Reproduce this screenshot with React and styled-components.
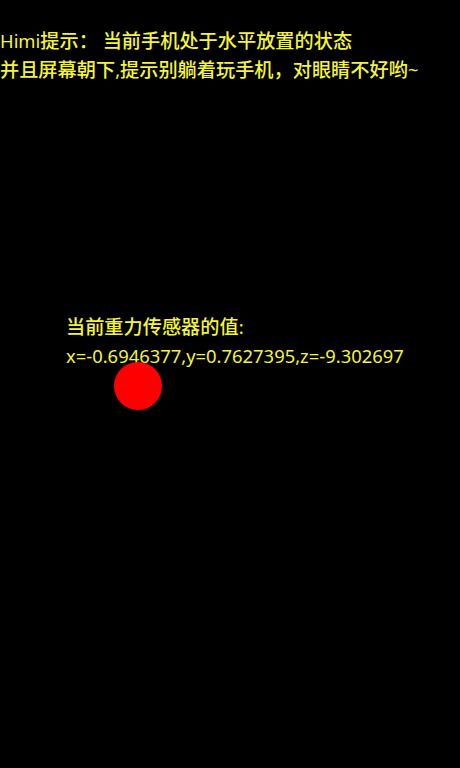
import React from "react";
import styled, { createGlobalStyle } from "styled-components";

const GlobalStyle = createGlobalStyle`
  html, body {
    margin: 0;
    padding: 0;
    background: #000;
  }
`;

const Canvas = styled.div`
  position: relative;
  width: 460px;
  height: 768px;
  background: #000;
  overflow: hidden;
  font-family: "Noto Sans", "Noto Sans CJK SC", sans-serif;
  font-size: 18.4px;
  color: #f4f43c;
`;

const Tip = styled.div`
  padding-top: 26px;
  line-height: 29px;
`;

const Line = styled.div`
  white-space: nowrap;
  height: 29px;
`;

const Han = styled.span`
  font-family: "Noto Sans CJK SC", sans-serif;
  font-size: 19.2px;
  font-weight: 500;
`;

const Sensor = styled.div`
  margin-top: 228px;
  padding-left: 66px;
  line-height: 29px;
`;

const Ball = styled.div`
  position: absolute;
  left: ${(p) => p.x - p.r}px;
  top: ${(p) => p.y - p.r}px;
  width: ${(p) => p.r * 2}px;
  height: ${(p) => p.r * 2}px;
  border-radius: 50%;
  background: #ff0000;
`;

const Text = ({ children }) => {
  const parts = String(children).split(/([\u3000-\u9fff\uff00-\uffef]+)/);
  return parts.map((s, i) =>
    i % 2 ? <Han key={i}>{s}</Han> : <React.Fragment key={i}>{s}</React.Fragment>
  );
};

const sensor = { x: -0.6946377, y: 0.7627395, z: -9.302697 };

const App = () => {
  return (
    <>
      <GlobalStyle />
      <Canvas>
        <Tip>
          <Line>
            <Text>Himi提示： 当前手机处于水平放置的状态</Text>
          </Line>
          <Line>
            <Text>并且屏幕朝下,提示别躺着玩手机，对眼睛不好哟~</Text>
          </Line>
        </Tip>
        <Sensor>
          <Line>
            <Text>当前重力传感器的值:</Text>
          </Line>
          <Line>{`x=${sensor.x},y=${sensor.y},z=${sensor.z}`}</Line>
        </Sensor>
        <Ball x={138} y={386} r={24} />
      </Canvas>
    </>
  );
};

export default App;
